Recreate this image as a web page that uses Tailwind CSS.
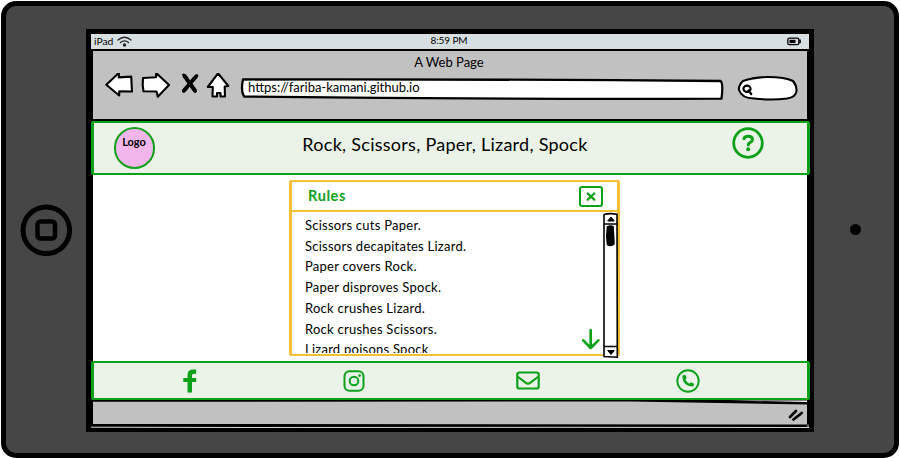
<!DOCTYPE html>
<html lang="en">
<head>
<meta charset="utf-8">
<title>Rock, Scissors, Paper, Lizard, Spock</title>
<script src="https://cdn.jsdelivr.net/npm/@tailwindcss/browser@4"></script>
</head>
<body class="w-[900px] h-[458px] overflow-hidden bg-white font-['Lato',sans-serif] text-black">
<div class="pl-px pt-px">
<div class="flex w-[898px] h-[457px] rounded-[15px] border-[5px] border-black bg-[#464646]">
  <!-- home button -->
  <div class="w-[80px] flex items-center justify-center">
    <svg class="w-[52px] h-[52px]" viewBox="0 0 52 52" fill="none" stroke="#000"><circle cx="26.300" cy="26.300" r="23.300" stroke-width="5"/><rect x="17.500" y="17.500" width="17.500" height="17" rx="3" stroke-width="4.500"/></svg>
  </div>
  <!-- screen -->
  <div class="mt-[23px] w-[728px] h-[403px] bg-black px-[5px] pt-[5px] flex flex-col">
    <div class="h-[15px] bg-[#d8dfe3] grid grid-cols-3 items-center pl-[3px] pr-[8px] leading-[12px]">
      <div class="flex items-center gap-[4px] pb-[3px]"><span class="text-[10.300px]">iPad</span>
        <svg class="w-[15px] h-[11px] mt-px" viewBox="0 0 15 11" fill="none" stroke="#222" stroke-width="1.300" stroke-linecap="round"><path d="M1 4Q7.500-1.500 14 4M3.500 6.500Q7.500 3.200 11.500 6.500"/><circle cx="7.500" cy="9" r="1" fill="#111"/></svg></div>
      <div class="text-center pb-[4px] pl-[3px] text-[10px] tracking-[-0.100px]">8:59 PM</div>
      <svg class="justify-self-end w-[14px] h-[9px] mb-[2px]" viewBox="0 0 14 9" fill="none" stroke="#000" stroke-width="1.300"><rect x=".8" y="1.200" width="11" height="6.500" rx="1.500"/><path d="M12 3.200h1.200v2.500H12"/><rect x="2.500" y="2.800" width="6" height="3.300" fill="#000" stroke="none"/></svg>
    </div>
    <div class="mt-[2px] mx-[2px] h-[68px] bg-[#c1c1c1]">
      <div class="h-[22px] text-center text-[13px] leading-[22px] pr-[2px]">A Web Page</div>
      <svg class="block w-[714px] h-[46px]" viewBox="93 73 714 46" fill="#fff" stroke="#000" stroke-width="2.100" stroke-linejoin="round" stroke-linecap="round">
        <path d="M106.300 84.800L119 72.800L118.800 77.400L131.200 76.600L132 91.500L119.300 91.300L119.200 95.500Z"/>
        <path d="M143 78L156 77.300L156.200 73L169 85L157.800 96.700L156.500 91.500L143.500 91.300L142.700 85Z"/>
        <path d="M184.500 76L195 90.500M196 76.500L184 90.500" stroke-width="4" fill="none"/><path d="M183.500 74.800L186.500 77.500M197 75.500L193 80M195.500 91.500L193 89M183.500 91.500L186 89" stroke-width="2.600"/>
        <path d="M218 73.300L228.300 86L224.700 86.500L225 96.500H220.500V93H217V96.500H212.500L212.800 87H207.800Z"/>
        <path d="M243 79.500Q480 79 720.500 81Q723.500 83 721.500 98.700Q480 99.500 244 96.500Q240.500 91 243 79.500Z" stroke-width="2.300"/>
        <path d="M743 81Q754 77 768 77Q785 77 793 81Q797 86 796.500 91Q796 97 787 98.500Q772 100.500 754 98.500Q742 98.500 739 90Q738.500 85 743 81Z"/>
        <ellipse cx="747" cy="88.800" rx="3.600" ry="3.200" fill="none"/><path d="M748.500 90.500L751.200 94" stroke-width="2.300"/>
        <text x="248" y="92.300" textLength="171.500" fill="#000" stroke="none" font-size="13">https://fariba-kamani.github.io</text>
      </svg>
    </div>
    <div class="mt-[2px] h-[54px] -mx-[0.500px] bg-[#ebf3e8] border-y-2 border-x-3 border-[#0da11a] rounded-[2px] flex justify-between pl-[20px] pr-[42px]">
      <div class="mt-[4px] w-[41px] h-[42px] rounded-full bg-[#f2b6ed] border-2 border-[#0da11a] text-center font-bold text-[11px] leading-[25px]">Logo</div>
      <h1 class="text-[18px] leading-[43px] tracking-[0.270px] pl-[3px] whitespace-nowrap">Rock, Scissors, Paper, Lizard, Spock</h1>
      <svg class="mt-[4px] w-[32px] h-[32px]" viewBox="0 0 32 32" fill="none" stroke="#0da11a" stroke-width="2.800" stroke-linecap="round"><circle cx="16" cy="16" r="14.300"/><path d="M12 11.800Q12.500 9.300 16.200 9.300Q20.500 9.300 20.500 12.600Q20.500 14.300 18 15.700Q16.200 16.600 16.200 18" stroke-width="3"/><circle cx="16.200" cy="22.300" r="2" fill="#0da11a" stroke="none"/></svg>
    </div>
    <div class="mx-[2px] h-[186px] bg-white pt-[5px] pl-[196px]">
      <div class="w-[331px] h-[176px] border-y-2 border-x-[3px] border-[#f2c037] rounded-[2px] flex flex-col">
        <div class="h-[30px] shrink-0 border-b-2 border-[#f2c037] flex justify-between pl-[16px] pr-[14px]">
          <h2 class="font-bold text-[#0da11a] text-[14.500px] tracking-[0.600px] leading-[28px]">Rules</h2>
          <svg class="mt-[4px] w-[24px] h-[21px]" viewBox="0 0 24 21" fill="none" stroke="#0da11a" stroke-width="2" stroke-linecap="round"><rect x="1" y="1" width="22" height="19" rx="2"/><path d="M8.700 7.500L15.300 13.700M15.300 7.500L8.700 13.700" stroke-width="2.300"/></svg>
        </div>
        <div class="flex h-[141px]">
          <ul class="w-[290px] shrink-0 pl-[13px] pt-[3px] overflow-hidden text-[13px] tracking-[0.250px] leading-[20.700px] whitespace-nowrap">
            <li>Scissors cuts Paper.</li><li>Scissors decapitates Lizard.</li><li>Paper covers Rock.</li><li>Paper disproves Spock.</li><li>Rock crushes Lizard.</li><li>Rock crushes Scissors.</li><li>Lizard poisons Spock</li>
          </ul>
          <svg class="self-end mb-[3px] w-[18px] h-[22px] shrink-0" viewBox="0 0 18 22" fill="none" stroke="#0da11a" stroke-width="2.600" stroke-linecap="round" stroke-linejoin="round"><path d="M8.700 2V20M1.300 12.300L8.700 20L16.300 12.300"/></svg>
          <svg class="ml-[3px] w-[16px] h-[147px] shrink-0" viewBox="603 211 16 147" fill="none" stroke="#000" stroke-width="1.600"><path fill="#fff" d="M604 213.500Q610 211.800 617 213.300L617.300 356.200L604 355.500Z"/><path d="M604 223H617M604 345.500H617"/><path d="M611 216L614.300 220H607.700ZM611 353.500L614.300 349.500H607.700Z" fill="#000" stroke-width="1"/><path d="M607.500 226Q610 224.500 613 225.500L614 243Q611 245.500 607.500 243.500Q606 235 607.500 226Z" fill="#000"/></svg>
        </div>
      </div>
    </div>
    <div class="h-[39px] -mx-[0.500px] bg-[#ebf3e8] border-y-2 border-x-3 border-[#0da11a] rounded-[2px] flex items-center">
      <svg class="ml-[89px] w-[14px] h-[24px]" viewBox="0 0 14 24" fill="#0da11a"><path d="M13.200 .5V4.700H10.800Q9 4.700 9 6.500V9H13.200V13H9V23.500H4.500V13H.3V9H4.500V6Q4.500 .5 10 .5Z"/></svg>
      <svg class="ml-[146px] w-[22px] h-[22px]" viewBox="0 0 22 22" fill="none" stroke="#0da11a" stroke-width="2"><rect x="1.500" y="1.300" width="19" height="19.500" rx="5"/><circle cx="11" cy="11" r="4.300"/><circle cx="16.600" cy="5.600" r="1.300" fill="#0da11a" stroke="none"/></svg>
      <svg class="ml-[151px] w-[24px] h-[19px]" viewBox="0 0 24 19" fill="none" stroke="#0da11a" stroke-width="2.200" stroke-linejoin="round"><rect x="1.300" y="1.500" width="21.400" height="16" rx="2"/><path d="M1.500 5.500L9.500 11.700Q12 13.600 14.500 11.700L22.500 5.500"/></svg>
      <svg class="ml-[136px] w-[24px] h-[24px]" viewBox="0 0 24 24"><circle cx="12" cy="12" r="10.700" fill="none" stroke="#0da11a" stroke-width="1.900"/><path d="M7.300 6.300L9.300 5.800L10.700 9.200L9.300 10.500Q10.500 13.200 13.500 14.700L14.800 13.200L18.200 14.700L17.600 16.800Q17.300 17.700 16.300 17.600Q7 17 6.300 7.700Q6.300 6.600 7.300 6.300Z" fill="#0da11a"/></svg>
    </div>
    <svg class="block w-[718px] h-[28px] shrink-0" viewBox="91 400 718 28"><path d="M93 401.800L630 401.500L807 404.500V424.500L93 424Z" fill="#c1c1c1"/><path d="M730 400.500H807V402Z" fill="#fff"/><path d="M91 427.200L250 427.500L560 427.300L809 427.500M808 424.500V427.500" fill="none" stroke="#d8d8d8" stroke-width="1"/><path d="M790 417L796 411M793.500 419.500L801.800 413" stroke="#000" stroke-width="2.700" stroke-linecap="round"/></svg>
  </div>
  <!-- camera -->
  <div class="w-[80px] flex items-center justify-center"><div class="w-[11px] h-[11px] rounded-full bg-black ml-[3px]"></div></div>
</div>
</div>
</body>
</html>
